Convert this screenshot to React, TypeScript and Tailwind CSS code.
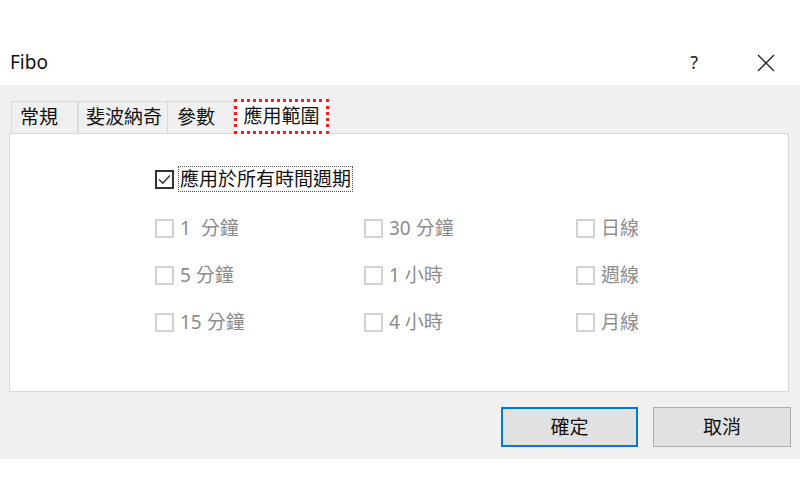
import React from "react";

const FONT = { fontFamily: '"Noto Sans", "Noto Sans CJK TC", sans-serif' };

function Box({ checked, disabled }: { checked?: boolean; disabled?: boolean }) {
  return (
    <div
      className={
        "w-[19px] h-[19px] shrink-0 border-2 bg-white flex items-center justify-center " +
        (disabled ? "border-[#d2d2d2]" : "border-[#333333]")
      }
    >
      {checked && (
        <svg width="15" height="15" viewBox="0 0 15 15">
          <path d="M2 7.5 L5.8 11.3 L13 3.5" fill="none" stroke="#333" strokeWidth="1.4" />
        </svg>
      )}
    </div>
  );
}

function Item({ label }: { label: string }) {
  return (
    <div className="flex items-center h-[26px] gap-[6px]">
      <Box disabled />
      <span className="text-[19px] leading-none text-[#8d8d8d] whitespace-pre">{label}</span>
    </div>
  );
}

export default function App() {
  const cols = [
    ["1  分鐘", "5 分鐘", "15 分鐘"],
    ["30 分鐘", "1 小時", "4 小時"],
    ["日線", "週線", "月線"],
  ];
  return (
    <div className="w-[800px] h-[500px] bg-white flex flex-col" style={FONT}>
      {/* title bar */}
      <div className="h-[85px] pt-[40px] shrink-0">
        <div className="h-[45px] flex items-center">
          <span className="ml-[10px] text-[19px] text-[#111]">Fibo</span>
          <span className="ml-auto mr-[59px] text-[18px] text-[#222]">?</span>
          <svg width="18" height="18" viewBox="0 0 18 18" className="mr-[25px]">
            <path d="M1 1 L17 17 M17 1 L1 17" stroke="#222" strokeWidth="1.3" fill="none" />
          </svg>
        </div>
      </div>

      {/* body */}
      <div className="h-[374px] bg-[#f0f0f0] flex flex-col shrink-0">
        {/* tabs */}
        <div className="flex items-end h-[48px] pl-[11px] relative z-10">
          <div className="h-[32px] w-[67px] border border-b-0 border-[#d9d9d9] flex items-center pl-[8px] text-[19px] text-[#111]">
            常規
          </div>
          <div className="h-[32px] w-[90px] border border-b-0 border-[#d9d9d9] flex items-center pl-[7px] text-[19px] text-[#111]">
            斐波納奇
          </div>
          <div className="h-[32px] w-[66px] border border-b-0 border-l-0 border-[#d9d9d9] flex items-center pl-[9px] text-[19px] text-[#111]">
            參數
          </div>
          <div className="h-[35px] w-[95px] -mb-px bg-white border-[3px] border-dotted border-[#ff1a1a] flex items-center justify-center text-[19px] text-[#111]">
            應用範圍
          </div>
        </div>

        {/* panel */}
        <div className="ml-[9px] w-[780px] h-[259px] bg-white border border-[#dadada] pl-[145px] pt-[32px]">
          <div className="flex items-center h-[26px]">
            <Box checked />
            <span className="ml-[4px] px-[1px] border border-dotted border-[#555] text-[19px] leading-[24px] text-[#111]">
              應用於所有時間週期
            </span>
          </div>
          <div className="flex mt-[23px]">
            {cols.map((c, i) => (
              <div key={i} className={"flex flex-col gap-[21px] " + (i === 0 ? "w-[209px]" : "w-[212px]")}>
                {c.map((l) => (
                  <Item key={l} label={l} />
                ))}
              </div>
            ))}
          </div>
        </div>

        {/* buttons */}
        <div className="flex justify-end gap-[15px] pr-[9px] mt-[15px]">
          <button className="w-[137px] h-[40px] bg-[#e1e1e1] border-2 border-[#0078d7] text-[19px] text-[#111]">
            確定
          </button>
          <button className="w-[138px] h-[40px] bg-[#e1e1e1] border border-[#adadad] text-[19px] text-[#111]">
            取消
          </button>
        </div>
      </div>
    </div>
  );
}
